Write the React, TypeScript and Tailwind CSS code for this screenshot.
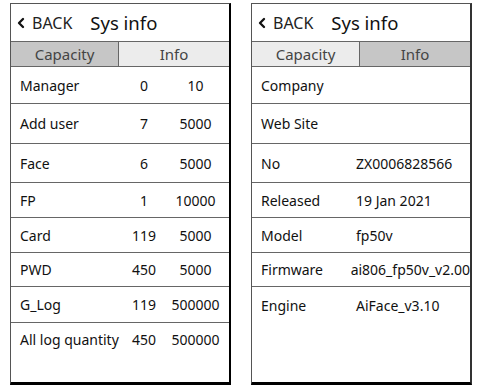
import { ChevronLeftIcon } from "lucide-react";

const capacityRows = [
  { label: "Manager", used: "0", total: "10", h: "h-[37px]" },
  { label: "Add user", used: "7", total: "5000", h: "h-[40px]" },
  { label: "Face", used: "6", total: "5000", h: "h-[39px]" },
  { label: "FP", used: "1", total: "10000", h: "h-[35px]" },
  { label: "Card", used: "119", total: "5000", h: "h-[35px]" },
  { label: "PWD", used: "450", total: "5000", h: "h-[34px]" },
  { label: "G_Log", used: "119", total: "500000", h: "h-[36px]" },
  { label: "All log quantity", used: "450", total: "500000", h: "flex-1" },
];

const infoRows = [
  { label: "Company", value: "", h: "h-[37px]" },
  { label: "Web Site", value: "", h: "h-[40px]" },
  { label: "No", value: "ZX0006828566", h: "h-[39px]" },
  { label: "Released", value: "19 Jan 2021", h: "h-[35px]" },
  { label: "Model", value: "fp50v", h: "h-[35px]" },
  { label: "Firmware", value: "ai806_fp50v_v2.00", h: "h-[34px]" },
  { label: "Engine", value: "AiFace_v3.10", h: "flex-1" },
];

function Header(props: { active: "capacity" | "info" }) {
  return (
    <>
      <div className="flex h-[37px] items-center pl-[2px] text-[#111]">
        <ChevronLeftIcon className="size-[16px]" strokeWidth={3.5} />
        <span className="ml-[3px] text-[16px] text-[#222]">BACK</span>
        <span className="ml-[18px] text-[18.5px]">Sys info</span>
      </div>
      <div className="flex h-[26px] border-y border-[#666] text-[15px] text-[#444]">
        <div
          className={`flex w-[108px] items-center justify-center border-r border-[#666] ${
            props.active === "capacity" ? "bg-[#c6c6c6]" : "bg-[#ececec]"
          }`}
        >
          Capacity
        </div>
        <div
          className={`flex flex-1 items-center justify-center ${
            props.active === "info" ? "bg-[#c6c6c6]" : "bg-[#ececec]"
          }`}
        >
          Info
        </div>
      </div>
    </>
  );
}

export default function App() {
  return (
    <div
      className="flex h-[391px] w-[482px] gap-[20px] bg-white pt-[3px] pl-[10px] text-[14px] text-[#111]"
      style={{ fontFamily: '"Noto Sans", "Open Sans", sans-serif' }}
    >
      <div className="flex h-[382px] w-[221px] flex-col border-l border-t border-[#555] border-r-2 border-b-[3px] border-r-black border-b-black">
        <Header active="capacity" />
        {capacityRows.map((row, i) => (
          <div
            key={row.label}
            className={`flex ${row.h} ${
              i < capacityRows.length - 1 ? "items-center border-b border-[#666]" : "items-start pt-[6px]"
            }`}
          >
            <span className="w-[113px] pl-[9px] whitespace-nowrap">{row.label}</span>
            <span className="w-[40px] text-center">{row.used}</span>
            <span className="flex-1 text-center pr-[2px]">{row.total}</span>
          </div>
        ))}
      </div>
      <div className="flex h-[382px] w-[221px] flex-col border-l border-t border-[#555] border-r-2 border-b-[3px] border-r-[#333] border-b-black">
        <Header active="info" />
        {infoRows.map((row, i) => (
          <div
            key={row.label}
            className={`flex ${row.h} ${
              i < infoRows.length - 1 ? "items-center border-b border-[#666]" : "items-start pt-[8px]"
            }`}
          >
            <span className="w-[104px] pl-[9px] whitespace-nowrap">{row.label}</span>
            <span className="whitespace-nowrap">{row.value}</span>
          </div>
        ))}
      </div>
    </div>
  );
}
